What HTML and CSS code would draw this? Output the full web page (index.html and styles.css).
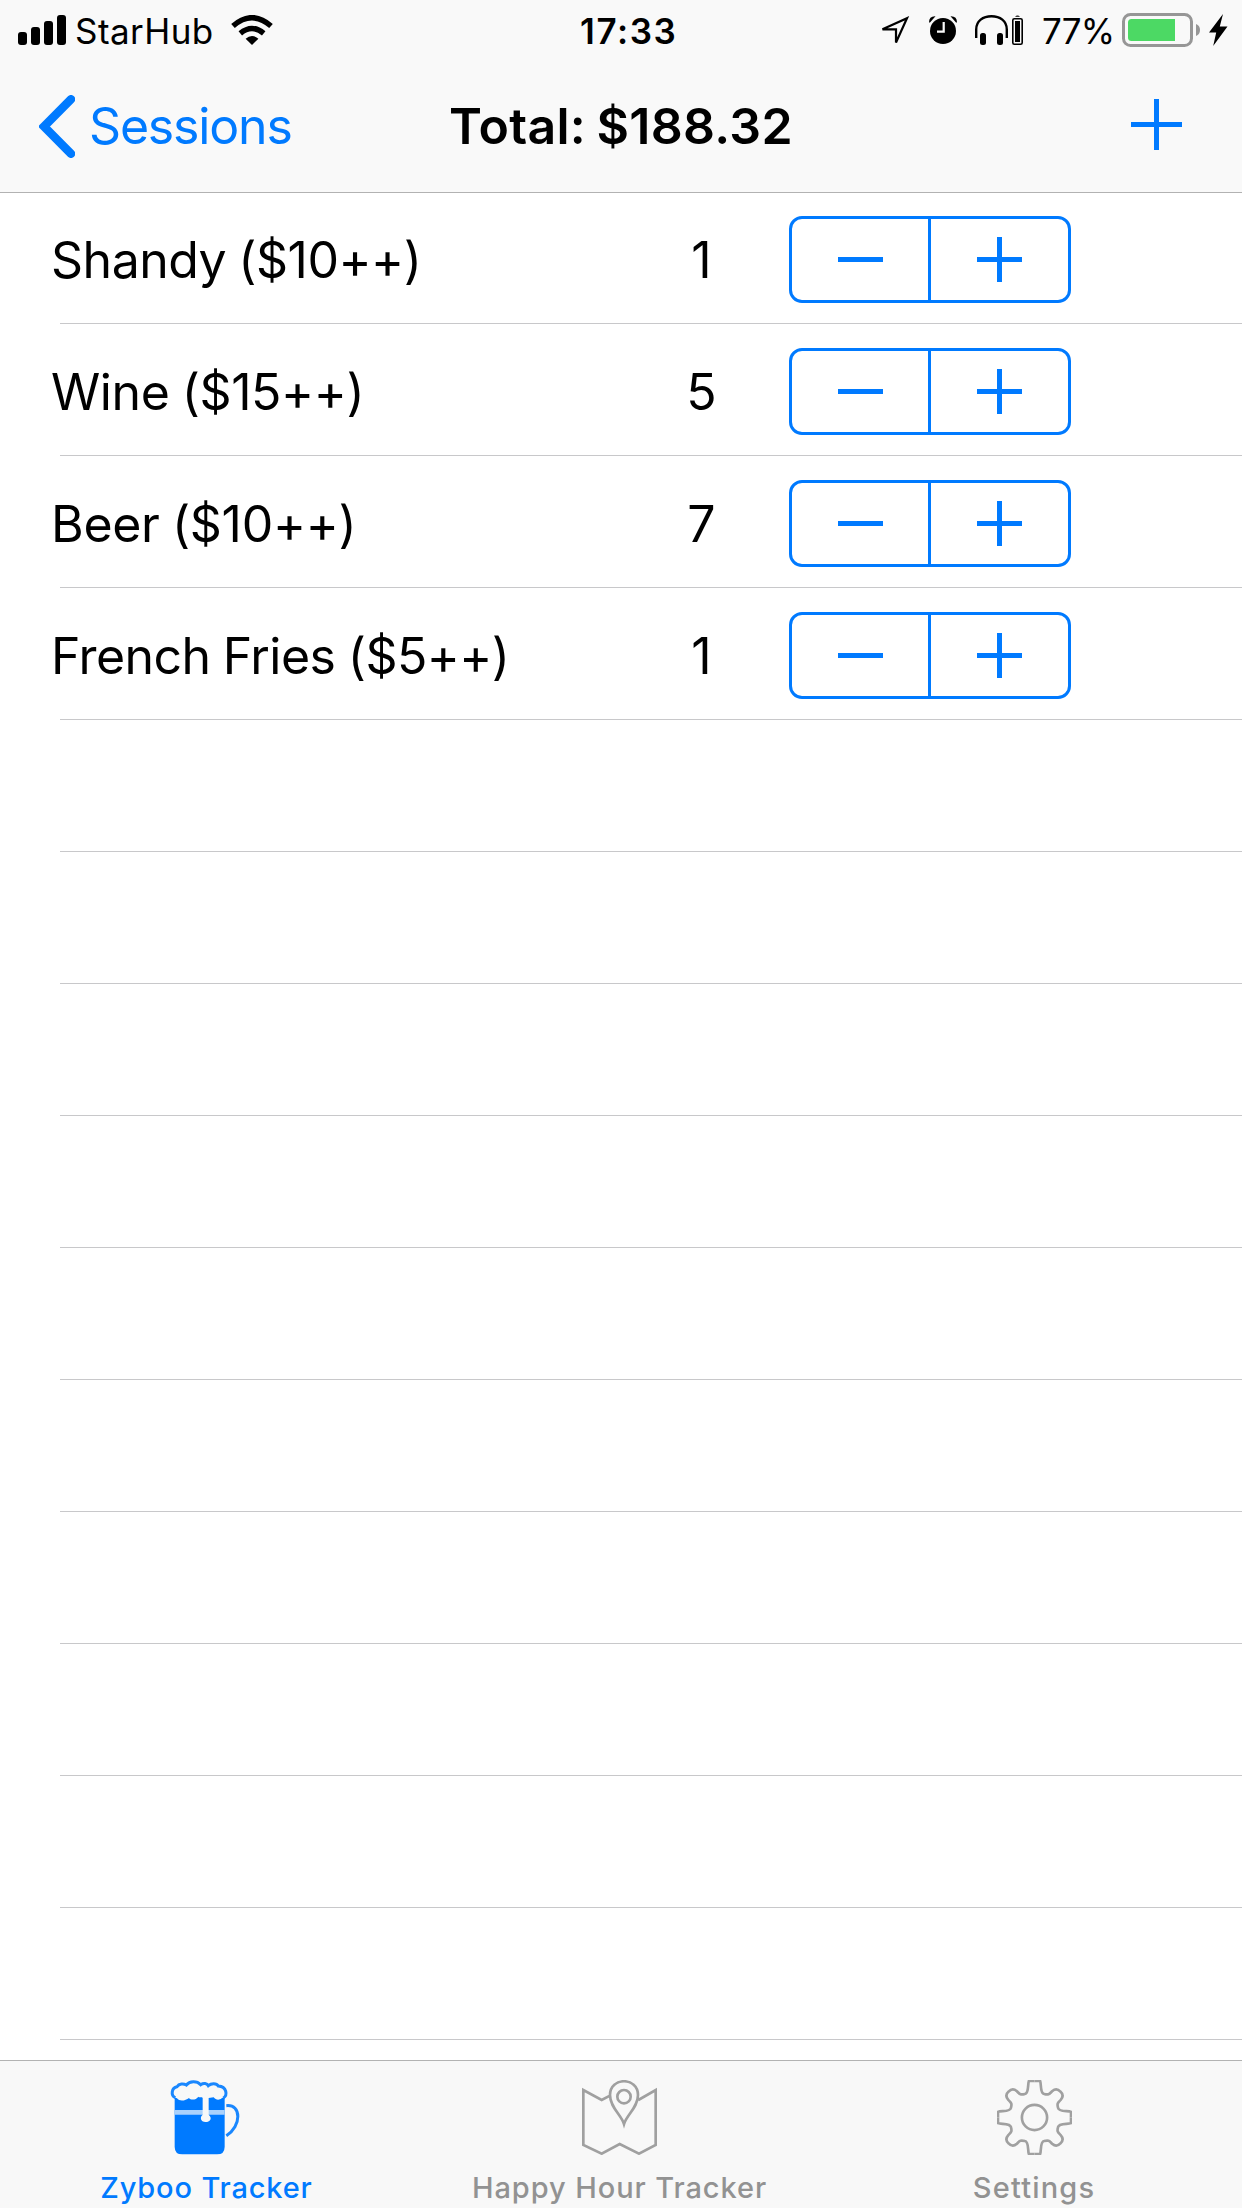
FILE: index.html
```html
<!DOCTYPE html>
<html lang="en">
<head>
<meta charset="utf-8">
<title>Zyboo Tracker</title>
<link rel="stylesheet" href="styles.css">
</head>
<body>
<svg class="defs" width="0" height="0">
  <defs>
    <symbol id="minus" viewBox="0 0 45 45"><path d="M0 20h45v5H0z"/></symbol>
    <symbol id="plus" viewBox="0 0 45 45"><path d="M0 20h20V0h5v20h20v5H25v20h-5V25H0z"/></symbol>
    <path id="gear-quarter" d="M113 3H96C92 12 97 40 84 42C70 46 68 42 60 34C51 26 43 26 35 35C26 43 26 51 34 60C42 68 46 70 42 84C40 97 12 92 3 96V113"/>
  </defs>
</svg>
<div class="app">
  <header class="top">
    <div class="status">
      <div class="status-left">
        <svg class="signal" width="48" height="30" viewBox="0 0 48 30"><rect y="17" width="9" height="13" rx="3"/><rect x="13" y="12" width="9" height="18" rx="3"/><rect x="26" y="6" width="9" height="24" rx="3"/><rect x="39" width="9" height="30" rx="3"/></svg>
        <span class="carrier">StarHub</span>
        <svg class="wifi" width="42" height="30" viewBox="0 0 42 30"><path d="M21 30L14.6 23.8Q21 18 27.400 23.8Z"/><path class="arc" d="M9.300 18.300Q21 8.700 32.700 18.300M2 11Q21 -5.500 40 11"/></svg>
      </div>
      <span class="time">17:33</span>
      <div class="status-right">
        <svg class="location" width="30" height="30" viewBox="0 0 30 30"><path d="M2.500 13.300L27 2.200L16 26.500V13.400Z"/></svg>
        <svg class="alarm" width="28" height="28" viewBox="0 0 28 28"><circle cx="14" cy="15" r="13"/><path d="M0 6.500Q0 0 6.500 .3L1 6.500zM28 6.500Q28 0 21.500 .3L27 6.500z"/><path class="hands" d="M14.700 6V15.700H8"/></svg>
        <svg class="headphones" width="49" height="30" viewBox="0 0 49 30"><path class="band" d="M1.200 23V14.500C1.200 6 8 1.200 16.500 1.200S31.800 6 31.800 14.500V23"/><rect x="5" y="18" width="6" height="12" rx="2.500"/><rect x="22" y="18" width="6" height="12" rx="2.500"/><path d="M40 1.800Q42.500 -1 45 1.800z"/><rect class="cell" x="37.800" y="3.800" width="9.400" height="25.400" rx="1.500"/><rect x="40" y="6" width="5" height="21"/></svg>
        <span class="percent">77%</span>
        <svg class="battery" width="78" height="34" viewBox="0 0 78 34"><rect class="case" x="1.500" y="1.500" width="68" height="31" rx="7"/><path class="cap" d="M74 11Q78 12.500 78 17T74 23z"/><path class="level" d="M9.500 6H53V28H9.500Q6 28 6 24.500V9.500Q6 6 9.500 6z"/></svg>
        <svg class="bolt" width="19" height="32" viewBox="0 0 19 32"><path d="M14 0L0 18.500H7.200L4.200 32L18.500 12.500H10.800Z"/></svg>
      </div>
    </div>
    <nav class="nav">
      <a class="back"><svg width="36" height="63" viewBox="0 0 36 63"><path d="M32 4.200L5 31.500L32 58.800"/></svg><span>Sessions</span></a>
      <h1 class="title">Total: $188.32</h1>
      <a class="add"><svg width="51" height="51" viewBox="0 0 51 51"><path d="M0 23h23V0h5v23h23v5H28v23h-5V28H0z"/></svg></a>
    </nav>
  </header>

  <main class="list">
    <div class="row"><span class="name shandy">Shandy ($10++)</span><span class="count">1</span><div class="stepper"><button><svg><use href="#minus"/></svg></button><button><svg><use href="#plus"/></svg></button></div></div>
    <div class="row"><span class="name wine">Wine ($15++)</span><span class="count">5</span><div class="stepper"><button><svg><use href="#minus"/></svg></button><button><svg><use href="#plus"/></svg></button></div></div>
    <div class="row"><span class="name beer">Beer ($10++)</span><span class="count">7</span><div class="stepper"><button><svg><use href="#minus"/></svg></button><button><svg><use href="#plus"/></svg></button></div></div>
    <div class="row"><span class="name fries">French Fries ($5++)</span><span class="count">1</span><div class="stepper"><button><svg><use href="#minus"/></svg></button><button><svg><use href="#plus"/></svg></button></div></div>
    <div class="row"></div><div class="row"></div><div class="row"></div><div class="row"></div><div class="row"></div>
    <div class="row"></div><div class="row"></div><div class="row"></div><div class="row"></div><div class="row"></div>
  </main>

  <footer class="tabs">
    <a class="tab active">
      <svg class="mug" viewBox="0 0 225 225"><path class="fill" d="M17 48H167V200Q167 223 144 223H40Q17 223 17 200Z"/><path class="stripe" d="M17 97H167"/><path class="foam" d="M24 55C6 50 6 24 24 20C30 10 44 10 52 15C62 2 84 2 95 14C104 8 114 10 118 17C126 10 142 8 148 18C172 20 176 48 158 55C150 62 140 60 134 52L119 54V104C132 116 122 126 110 126C94 126 92 110 101 104V54C98 50 92 54 88 50C80 62 64 60 60 54C50 62 32 66 24 55Z"/><path class="rim" d="M19 53C4 46 8 23 24 20C30 10 44 10 52 15C62 2 84 2 95 14C104 8 114 10 118 17C126 10 142 8 148 18C174 20 176 46 163 54"/><path class="handle" d="M172 77C218 72 218 138 172 167"/></svg>
      <span>Zyboo Tracker</span>
    </a>
    <a class="tab">
      <svg class="line" viewBox="0 0 225 225"><path d="M84 47L59 60L4 30V195L59 221L113 192L171 221L221 195V30L169 60M126 132C118 105 84 82 84 45C84 -10 168 -10 168 45C168 82 134 105 126 132Z"/><circle cx="126" cy="50" r="20"/></svg>
      <span class="happy">Happy Hour Tracker</span>
    </a>
    <a class="tab">
      <svg class="line" viewBox="0 0 226 226"><use href="#gear-quarter"/><use href="#gear-quarter" transform="rotate(90 113 113)"/><use href="#gear-quarter" transform="rotate(180 113 113)"/><use href="#gear-quarter" transform="rotate(270 113 113)"/><circle cx="113" cy="113" r="38"/></svg>
      <span class="settings">Settings</span>
    </a>
  </footer>
</div>
</body>
</html>
```
FILE: styles.css
```css
* { box-sizing: border-box; }
body {
  margin: 0;
  background: #fff;
  color: #000;
  font-family: "Inter", "Liberation Sans", sans-serif;
}
svg { display: block; flex: none; }
.defs { position: absolute; }
.app {
  display: flex;
  flex-direction: column;
  width: 1242px;
  height: 2208px;
  overflow: hidden;
}

/* status bar and navigation bar */
.top {
  flex: none;
  height: 192px;
  background: #f9f9f9;
  box-shadow: 0 1px 0 #b2b2b2;
  z-index: 1;
}
.status {
  display: flex;
  align-items: flex-start;
  height: 60px;
  font-size: 35px;
  line-height: 62px;
  white-space: nowrap;
}
.status-left { display: flex; width: 580px; padding-left: 18px; }
.signal, .wifi { margin-top: 15px; }
.carrier { width: 155px; padding-left: 9px; letter-spacing: .45px; }
.wifi { margin-left: 10px; }
.wifi .arc { fill: none; stroke: #000; stroke-width: 5.5px; }
.time { width: 300px; font-weight: 600; letter-spacing: 1.6px; }
.status-right { display: flex; flex: 1; }
.location { margin-top: 16px; }
.location path { fill: none; stroke: #000; stroke-width: 2.2px; }
.alarm { margin: 16px 0 0 19px; }
.alarm .hands { fill: none; stroke: #f9f9f9; stroke-width: 2.2px; }
.headphones { margin: 15px 0 0 18px; }
.headphones .band { fill: none; stroke: #000; stroke-width: 2.4px; }
.headphones .cell { fill: none; stroke: #000; stroke-width: 1.6px; }
.percent { width: 98px; padding-left: 18px; letter-spacing: -.8px; }
.battery { margin-top: 13px; }
.battery .case { fill: none; stroke: #969696; stroke-width: 3px; }
.battery .cap { fill: #969696; }
.battery .level { fill: #4cd964; }
.bolt { margin: 14px 0 0 9px; }

.nav {
  display: grid;
  grid-template-columns: 1fr auto 1fr;
  height: 132px;
  line-height: 132px;
  font-size: 50px;
}
.back { display: flex; padding-left: 39px; color: #007aff; letter-spacing: -1.18px; }
.back svg { margin: 35px 14px 0 0; }
.back path { fill: none; stroke: #007aff; stroke-width: 8.5px; stroke-linecap: round; stroke-linejoin: miter; }
.title { margin: 0; font-size: 50px; font-weight: 600; letter-spacing: .3px; word-spacing: -2.5px; }
.add { justify-self: end; padding: 39px 60px 0 0; }
.add path { fill: #007aff; }

/* item list */
.list { flex: none; height: 1868px; overflow: hidden; }
.row {
  display: flex;
  height: 132px;
  padding: 24px 0 0 51px;
  background: linear-gradient(#c8c8ca, #c8c8ca) 60px 131px / 100% 1px no-repeat;
  font-size: 50px;
  line-height: 88px;
}
.name { width: 600px; letter-spacing: -.5px; word-spacing: -1.5px; }
.wine { letter-spacing: -.4px; }
.beer { letter-spacing: -.3px; }
.fries { letter-spacing: -.58px; word-spacing: -1px; }
.count { width: 101px; text-align: center; }
.stepper {
  display: flex;
  width: 282px;
  height: 87px;
  margin-left: 37px;
  border: 3px solid #007aff;
  border-radius: 13px;
}
.stepper button {
  display: flex;
  align-items: center;
  justify-content: center;
  flex: 1;
  padding: 0;
  border: 0;
  background: none;
  fill: #007aff;
}
.stepper button:first-child { flex: none; width: 139px; border-right: 3px solid #007aff; }
.stepper svg { width: 45px; height: 45px; }

/* tab bar */
.tabs {
  display: grid;
  grid-template-columns: 413px 413px 416px;
  height: 148px;
  border-top: 1px solid #b2b2b2;
  background: #f8f8f8;
}
.tab {
  display: flex;
  flex-direction: column;
  align-items: center;
  padding-top: 19px;
  color: #929292;
  font-size: 29px;
  font-weight: 500;
  line-height: 36px;
  letter-spacing: .84px;
}
.tab svg { width: 75px; height: 75px; }
.tab span { margin-top: 15px; }
.happy { letter-spacing: .91px; }
.settings { letter-spacing: 1.17px; }
.active { color: #007aff; }
.line { fill: none; stroke: #a0a0a0; stroke-width: 8px; }
.mug .fill { fill: #007aff; }
.mug .stripe { stroke: #a9d1fc; stroke-width: 14px; }
.mug .foam { fill: #f8f8f8; }
.mug .rim, .mug .handle { fill: none; stroke: #1a87fe; stroke-width: 9px; }
```
